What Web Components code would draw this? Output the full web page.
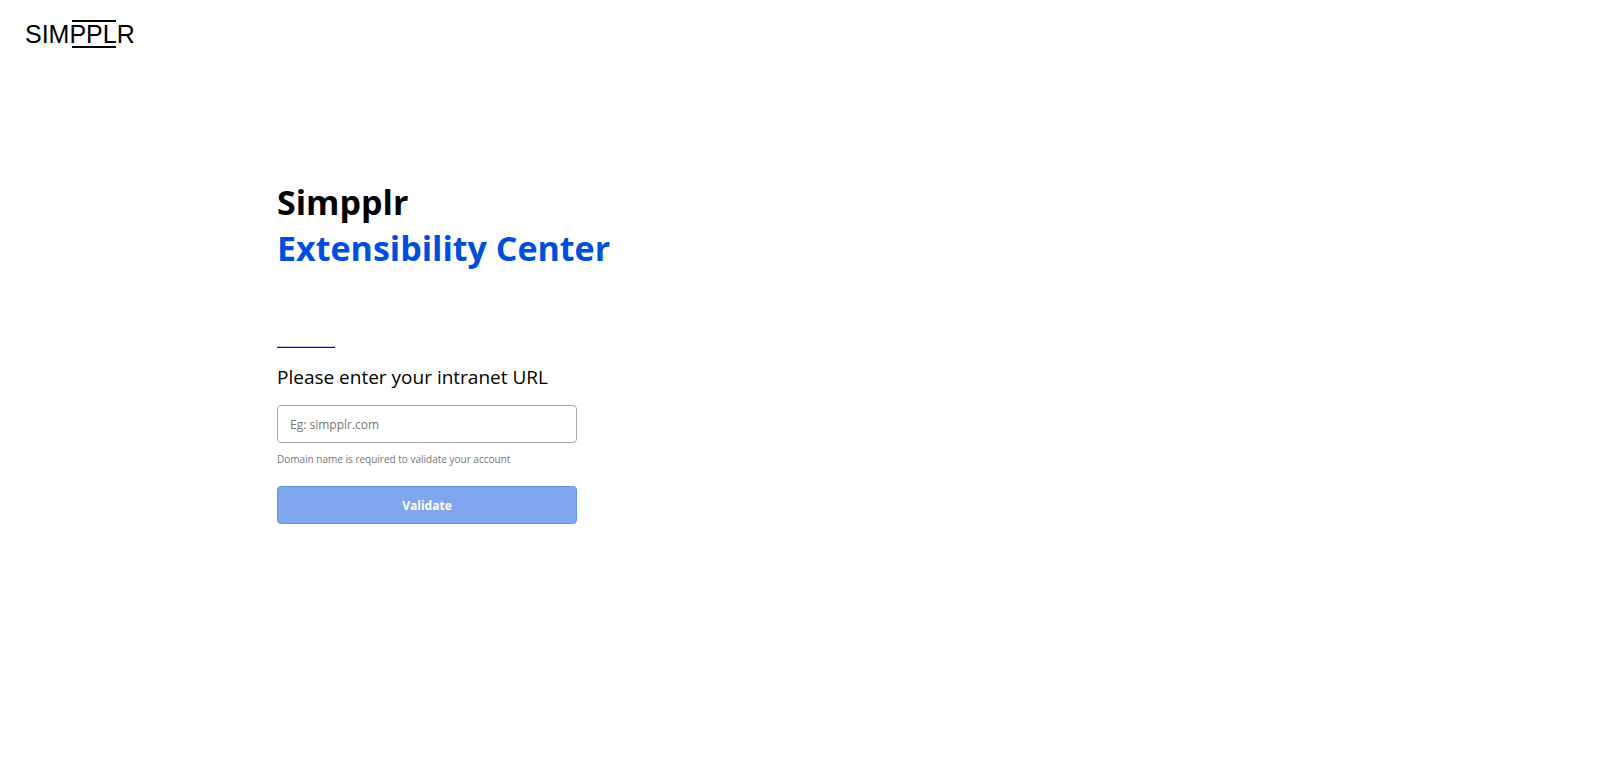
<!DOCTYPE html>
<html lang="en">
<head>
<meta charset="utf-8">
<meta name="viewport" content="width=device-width, initial-scale=1">
<title>Simpplr Extensibility Center</title>
<style>
body { margin: 0; background: #fff; color: #000; font-family: "Segoe UI", "Open Sans", sans-serif; }
</style>
</head>
<body>
<extensibility-page></extensibility-page>
<script>
const define = (name, html, setup) => customElements.define(name, class extends HTMLElement {
  constructor() {
    super();
    this.attachShadow({ mode: "open" }).innerHTML = html;
    if (setup) setup(this.shadowRoot);
  }
});

define("brand-logo", `
<style>
:host { display: block; }
a { display: inline-block; color: #000; text-decoration: none; }
svg { display: block; }
text { font: 25px "Liberation Sans", Arial, sans-serif; fill: currentColor; }
</style>
<a href="#" aria-label="Simpplr home">
  <svg width="112" height="32" viewBox="0 0 112 32">
    <path d="M48 3H92M48 29H92" stroke="currentColor" stroke-width="2"/>
    <text x="1" y="25">SIMPPLR</text>
  </svg>
</a>`);

define("page-title", `
<style>
:host { display: block; }
h1 { margin: 0; font-size: 34px; line-height: 46px; font-weight: 700; }
span { display: block; }
.accent { color: #004edc; }
</style>
<h1><span><slot></slot></span><span class="accent"><slot name="accent"></slot></span></h1>`);

define("domain-form", `
<style>
:host { display: block; }
.rule { width: 58px; height: 1px; margin: 0 0 15px; border: 0; background: #0000dc; box-shadow: 0 -1px #c4ccf6; }
label { display: block; margin-bottom: 14px; font-size: 19px; line-height: 28px; }
input, button { display: block; box-sizing: border-box; width: 100%; max-width: 300px; height: 38px; border-radius: 4px; font-family: inherit; font-size: 12px; }
input { padding: 0 12px; border: 1px solid #a8a8a8; background: #fff; color: #222; }
input::placeholder { color: #757575; opacity: 1; }
p { margin: 8px 0 19px; font-size: 10px; line-height: 16px; color: #757575; }
button { padding: 0; border: 1px solid #6494e4; background: #80a7ed; color: #fff; font-weight: 700; }
</style>
<form>
  <hr class="rule">
  <label for="domain">Please enter your intranet URL</label>
  <input id="domain" type="text" placeholder="Eg: simpplr.com" aria-describedby="hint">
  <p id="hint">Domain name is required to validate your account</p>
  <button type="submit" disabled>Validate</button>
</form>`, root => {
  const input = root.querySelector("input");
  input.addEventListener("input", () => {
    root.querySelector("button").disabled = !input.value.trim();
  });
  root.querySelector("form").addEventListener("submit", e => e.preventDefault());
});

define("extensibility-page", `
<style>
:host { display: block; }
header { padding: 18px 24px; }
main { box-sizing: content-box; max-width: 1046px; margin: 0 auto; padding: 106px 24px 48px; }
domain-form { margin-top: 76px; }
</style>
<header><brand-logo></brand-logo></header>
<main>
  <page-title>Simpplr<span slot="accent">Extensibility Center</span></page-title>
  <domain-form></domain-form>
</main>`);
</script>
</body>
</html>
